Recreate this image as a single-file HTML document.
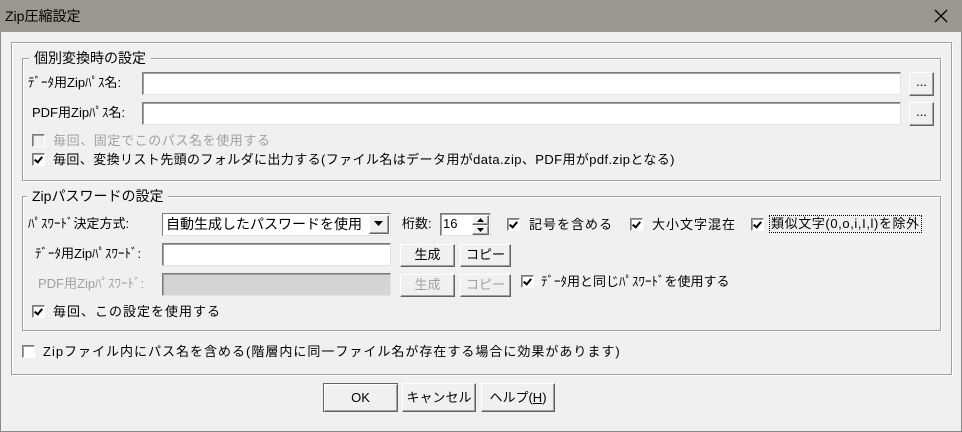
<!DOCTYPE html>
<html><head><meta charset="utf-8"><style>
*{box-sizing:border-box;margin:0;padding:0}
body{width:962px;height:432px;background:#f0f0f0;font-family:"Liberation Sans","Noto Sans CJK JP",sans-serif;font-size:13px;color:#000;position:relative;overflow:hidden}
.a{position:absolute;white-space:nowrap;line-height:16px}
.title{position:absolute;left:0;top:0;width:962px;height:32px;background:#9c9690}
.win{position:absolute;left:0;top:32px;width:962px;height:400px;border:1px solid #8a8a8a;border-top:none}
.frame{position:absolute;border:1px solid #a0a0a0;box-shadow:inset 1px 1px 0 #fff,1px 1px 0 #fff}
.lg{position:absolute;background:#f0f0f0;padding:0 5px;line-height:16px}
.inp{position:absolute;background:#fff;border:1px solid;border-color:#7a7a7a #e3e3e3 #e3e3e3 #7a7a7a;box-shadow:inset 1px 1px 0 #a0a0a0}
.btn{position:absolute;background:#f0f0f0;border:1px solid;border-color:#fff #646464 #646464 #fff;box-shadow:inset -1px -1px 0 #a0a0a0;text-align:center;line-height:20px}
.cb{position:absolute;width:13px;height:13px;background:#fff;border:1px solid;border-color:#7a7a7a #fff #fff #7a7a7a;box-shadow:inset 1px 1px 0 #a0a0a0}
.cb.c::after{content:"";position:absolute;left:3px;top:1px;width:3px;height:6px;border:solid #000;border-width:0 2px 2px 0;transform:rotate(40deg)}
.dis{color:#a0a0a0}
</style></head><body>
<div class="title"></div>
<div class="a" style="left:5px;top:8px;font-size:14px">Zip圧縮設定</div>
<svg style="position:absolute;left:934px;top:9px" width="14" height="14"><path d="M1 1L13 13M13 1L1 13" stroke="#000" stroke-width="1.3"/></svg>
<div class="win"></div>
<div class="frame" style="left:11px;top:42px;width:941px;height:333px"></div>

<div class="frame" style="left:22px;top:58px;width:919px;height:123px"></div>
<div class="lg" style="left:29px;top:50px;font-size:14px">個別変換時の設定</div>
<div class="a" style="left:28px;top:75px">ﾃﾞｰﾀ用Zipﾊﾟｽ名:</div>
<div class="inp" style="left:142px;top:72px;width:759px;height:23px"></div>
<div class="btn" style="left:909px;top:72px;width:25px;height:24px;line-height:18px">...</div>
<div class="a" style="left:32px;top:105px">PDF用Zipﾊﾟｽ名:</div>
<div class="inp" style="left:142px;top:102px;width:759px;height:23px"></div>
<div class="btn" style="left:909px;top:102px;width:25px;height:24px;line-height:18px">...</div>
<div class="cb" style="left:32px;top:134px;background:#f0f0f0"></div>
<div class="a dis" style="left:53px;top:133px;letter-spacing:0.6px">毎回、固定でこのパス名を使用する</div>
<div class="cb c" style="left:32px;top:153px"></div>
<div class="a" style="left:53px;top:152px;letter-spacing:0.4px">毎回、変換リスト先頭のフォルダに出力する(ファイル名はデータ用がdata.zip、PDF用がpdf.zipとなる)</div>

<div class="frame" style="left:22px;top:196px;width:919px;height:135px"></div>
<div class="lg" style="left:27px;top:188px;font-size:14px">Zipパスワードの設定</div>
<div class="a" style="left:28px;top:216px">ﾊﾟｽﾜｰﾄﾞ決定方式:</div>
<div class="inp" style="left:162px;top:213px;width:229px;height:23px;box-shadow:none;border-color:#7a7a7a #e3e3e3 #e3e3e3 #7a7a7a"></div>
<div class="a" style="left:166px;top:216px;font-size:14px">自動生成したパスワードを使用</div>
<div class="btn" style="left:369px;top:215px;width:20px;height:19px"></div>
<svg style="position:absolute;left:374px;top:221px" width="10" height="6"><path d="M0 0H9L4.5 5Z" fill="#000"/></svg>
<div class="a" style="left:402px;top:216px">桁数:</div>
<div class="inp" style="left:440px;top:213px;width:51px;height:23px"></div>
<div class="a" style="left:443px;top:216px">16</div>
<div class="btn" style="left:472px;top:215px;width:17px;height:10px"></div>
<div class="btn" style="left:472px;top:225px;width:17px;height:10px"></div>
<svg style="position:absolute;left:476px;top:217px" width="10" height="16"><path d="M1 5H8L4.5 1ZM1 11H8L4.5 15Z" fill="#000"/></svg>
<div class="cb c" style="left:507px;top:218px"></div>
<div class="a" style="left:529px;top:217px;letter-spacing:1px">記号を含める</div>
<div class="cb c" style="left:630px;top:218px"></div>
<div class="a" style="left:652px;top:217px;letter-spacing:1px">大小文字混在</div>
<div class="cb c" style="left:751px;top:218px"></div>
<div class="a" style="left:770px;top:216px;outline:1px dotted #000;padding:0 1px;letter-spacing:0.6px">類似文字(0,o,i,I,l)を除外</div>

<div class="a" style="left:35px;top:246px">ﾃﾞｰﾀ用Zipﾊﾟｽﾜｰﾄﾞ:</div>
<div class="inp" style="left:162px;top:243px;width:229px;height:23px"></div>
<div class="btn" style="left:400px;top:244px;width:55px;height:23px">生成</div>
<div class="btn" style="left:460px;top:244px;width:51px;height:23px">コピー</div>
<div class="a dis" style="left:38px;top:276px">PDF用Zipﾊﾟｽﾜｰﾄﾞ:</div>
<div class="inp" style="left:162px;top:273px;width:229px;height:23px;background:#d4d4d4"></div>
<div class="btn dis" style="left:400px;top:274px;width:55px;height:23px">生成</div>
<div class="btn dis" style="left:460px;top:274px;width:51px;height:23px">コピー</div>
<div class="cb c" style="left:521px;top:275px"></div>
<div class="a" style="left:541px;top:274px">ﾃﾞｰﾀ用と同じﾊﾟｽﾜｰﾄﾞを使用する</div>
<div class="cb c" style="left:32px;top:305px"></div>
<div class="a" style="left:53px;top:304px;letter-spacing:1px">毎回、この設定を使用する</div>

<div class="cb" style="left:22px;top:345px"></div>
<div class="a" style="left:43px;top:344px;letter-spacing:1px">Zipファイル内にパス名を含める(階層内に同一ファイル名が存在する場合に効果があります)</div>

<div class="btn" style="left:323px;top:383px;width:75px;height:29px;border-color:#646464;box-shadow:inset 1px 1px 0 #fff,inset -1px -1px 0 #a0a0a0;line-height:27px">OK</div>
<div class="btn" style="left:402px;top:383px;width:74px;height:29px;line-height:27px">キャンセル</div>
<div class="btn" style="left:481px;top:383px;width:74px;height:29px;line-height:27px">ヘルプ(<u>H</u>)</div>
</body></html>
